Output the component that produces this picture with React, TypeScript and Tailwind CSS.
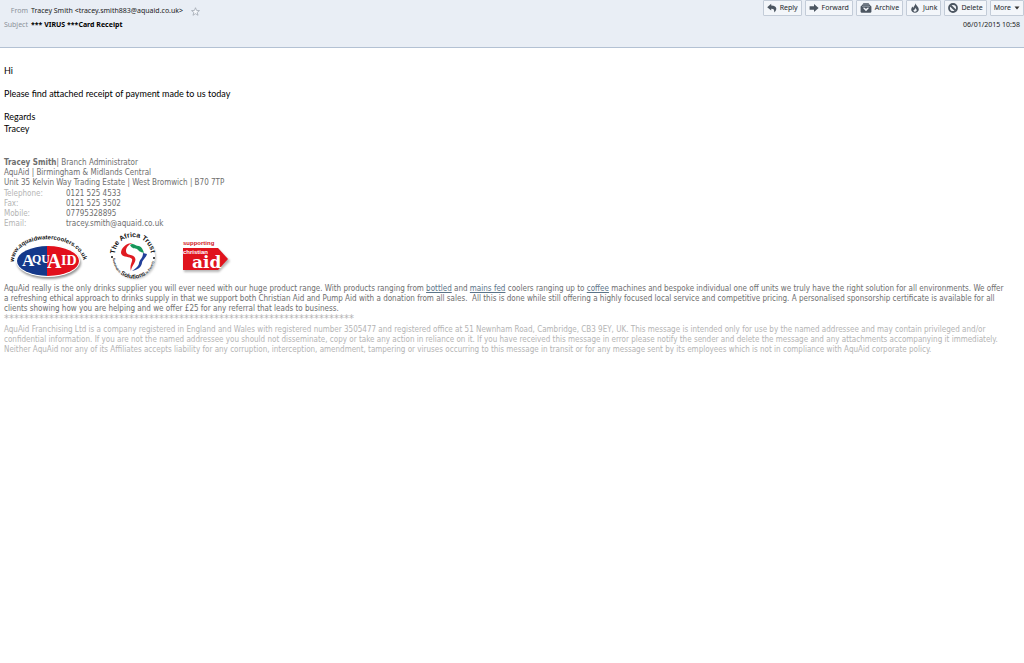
import React from 'react';

const contactRows = [
  { label: 'Telephone:', value: '0121 525 4533' },
  { label: 'Fax:', value: '0121 525 3502' },
  { label: 'Mobile:', value: '07795328895' },
  { label: 'Email:', value: 'tracey.smith@aquaid.co.uk' },
];

const ReplyIcon = () => (
  <svg viewBox="0 0 10 10" className="h-[10px] w-[10px]" aria-hidden="true">
    <path d="M4.2 0.8 L0.2 4.2 L4.2 7.6 V5.7 C6.2 5.6 7.4 6 7.3 9.4 C10.8 6.4 9.8 2.6 4.2 2.6 Z" fill="#4c5661" />
  </svg>
);

const ForwardIcon = () => (
  <svg viewBox="0 0 10 10" className="h-[10px] w-[10px]" aria-hidden="true">
    <path d="M0.6 3.2 H5 V1 L9.6 5 L5 9 V6.8 H0.6 Z" fill="#4c5661" />
  </svg>
);

const ArchiveIcon = () => (
  <svg viewBox="0 0 12 10" className="h-[10px] w-[12px]" aria-hidden="true">
    <path d="M3.4 0.2 H8.6 L9.6 1.8 L11.4 3.4 V9 L10.6 9.8 H1.4 L0.6 9 V3.4 L2.4 1.8 Z" fill="#4c5661" />
    <path d="M3 1.9 H9 M2 3.4 H10" stroke="#aeb7c1" strokeWidth="0.6" />
    <path d="M2.8 4.8 H4.8 L6 6 L7.2 4.8 H9.2 L6 8.2 Z" fill="#f3f6fa" />
  </svg>
);

const JunkIcon = () => (
  <svg viewBox="0 0 10 10" className="h-[10px] w-[10px]" aria-hidden="true">
    <path d="M5.4 0.2 C5.8 2.6 9 3.8 8.8 6.6 C8.7 8.6 7 9.8 5 9.8 C2.8 9.8 1.2 8.5 1.2 6.6 C1.2 5 2 4.2 2.6 3.4 C2.8 4.2 3 4.6 3.5 4.8 C3.6 3 5.4 2.4 5.4 0.2 Z" fill="#4c5661" />
    <path d="M5.2 4.6 C5.2 5.8 6.8 6 6.7 7.3 C6.6 8.3 5.9 8.7 5 8.7 C4 8.7 3.4 8 3.4 7.2 C4.6 7.2 5.2 6 5.2 4.6 Z" fill="#f3f6fa" />
  </svg>
);

const DeleteIcon = () => (
  <svg viewBox="0 0 10 10" className="h-[10px] w-[10px]" aria-hidden="true">
    <circle cx="5" cy="5" r="4" fill="none" stroke="#4c5661" strokeWidth="1.8" />
    <path d="M2.4 2.6 L7.6 7.4" stroke="#4c5661" strokeWidth="2" />
  </svg>
);

const StarIcon = () => (
  <svg viewBox="0 0 10 10" className="h-[9px] w-[9px]" aria-hidden="true">
    <path d="M5 0.8 L6.2 3.8 L9.4 4 L6.9 6 L7.8 9.2 L5 7.4 L2.2 9.2 L3.1 6 L0.6 4 L3.8 3.8 Z" fill="#f6f8fb" stroke="#9aa2ab" strokeWidth="0.8" />
  </svg>
);

const actions = [
  { label: 'Reply', icon: <ReplyIcon /> },
  { label: 'Forward', icon: <ForwardIcon /> },
  { label: 'Archive', icon: <ArchiveIcon /> },
  { label: 'Junk', icon: <JunkIcon /> },
  { label: 'Delete', icon: <DeleteIcon /> },
];

const buttonClass =
  'flex h-4 items-center gap-[3px] rounded-[1px] border border-[#c3ccd8] bg-[#f3f6fa] px-[3px] text-[#22262b]';

const linkClass = 'text-[#5b7488] underline';

const AquaidLogo = () => (
  <svg viewBox="0 0 90 50" className="h-[50px] w-[90px]" role="img" aria-label="AquAid">
    <defs>
      <path id="aquaid-arc" d="M14 31 C15 0 80 1 84 32" />
      <clipPath id="aquaid-oval">
        <ellipse cx="48" cy="30" rx="31" ry="15" />
      </clipPath>
      <filter id="logo-shadow" x="-20%" y="-20%" width="140%" height="150%">
        <feGaussianBlur stdDeviation="1.2" />
      </filter>
    </defs>
    <ellipse cx="49" cy="32" rx="32" ry="16" fill="#666666" opacity="0.7" filter="url(#logo-shadow)" />
    <ellipse cx="48" cy="30" rx="32" ry="16" fill="#ffffff" />
    <g clipPath="url(#aquaid-oval)">
      <rect x="16" y="14" width="31" height="34" fill="#14388a" />
      <rect x="47" y="14" width="33" height="34" fill="#e2101c" />
    </g>
    <g fill="#ffffff" fontFamily="'Liberation Serif', serif" fontWeight="bold">
      <text x="22" y="35" fontSize="17">A</text>
      <text x="32" y="32" fontSize="12">QU</text>
      <text x="47" y="37" fontSize="20">A</text>
      <text x="61" y="34" fontSize="14">ID</text>
    </g>
    <text fill="#111111" fontFamily="'Liberation Sans', sans-serif" fontSize="6" fontWeight="bold">
      <textPath href="#aquaid-arc">www.aquaidwatercoolers.co.uk</textPath>
    </text>
  </svg>
);

const AfricaTrustLogo = () => (
  <svg viewBox="0 0 50 50" className="h-[50px] w-[50px]" role="img" aria-label="The Africa Trust">
    <defs>
      <path id="africa-top" d="M6 23 A18 18 0 0 1 42 25 V32" />
      <path id="africa-bottom" d="M4 27 A20 20 0 0 0 45 27" />
      <filter id="africa-shadow" x="-20%" y="-20%" width="140%" height="140%">
        <feGaussianBlur stdDeviation="1.2" />
      </filter>
    </defs>
    <circle cx="26" cy="27" r="21" fill="#999999" opacity="0.6" filter="url(#africa-shadow)" />
    <circle cx="24" cy="25" r="22" fill="#ffffff" />
    <path d="M24 12 C17 12 12 17 12 22 C13 27 21 25 23 28 C24 31 20 34 22 40 C22 35 28 31 26 27 C25 23 17 25 17 20 C17 16 20 13 24 12 Z" fill="#e01b22" />
    <path d="M21 14 C24 11 26 15 30 15 C33 16 34 19 35 22 C31 21 30 20 28 18 C26 17 23 18 21 14 Z" fill="#17965a" />
    <path d="M34 22 L38 23 C37 27 33 29 33 32 C32 37 28 39 23 40 C27 37 30 35 30 32 C31 28 34 27 34 22 Z" fill="#213f9a" />
    <g fill="#111111" fontFamily="'Liberation Sans', sans-serif" fontWeight="bold">
      <text fontSize="7">
        <textPath href="#africa-top">The Africa Trust</textPath>
      </text>
      <text>
        <textPath href="#africa-bottom">
          <tspan fontSize="3">Sustainable </tspan>
          <tspan fontSize="6">Solutions</tspan>
          <tspan fontSize="3"> to Poverty</tspan>
        </textPath>
      </text>
      <circle cx="3" cy="26" r="1" />
      <circle cx="45" cy="27" r="1" />
    </g>
  </svg>
);

const ChristianAidLogo = () => (
  <svg viewBox="0 0 52 40" className="h-[40px] w-[52px]" role="img" aria-label="Supporting Christian Aid">
    <defs>
      <filter id="aid-shadow" x="-20%" y="-20%" width="140%" height="140%">
        <feGaussianBlur stdDeviation="0.8" />
      </filter>
    </defs>
    <path d="M2 11 H37 L48 22 L37 33 H2 Z" fill="#888888" opacity="0.6" filter="url(#aid-shadow)" />
    <path d="M1 9 H36 L46 20 L36 31 H1 Z" fill="#e0131d" />
    <g fontFamily="'Liberation Sans', sans-serif" fontWeight="bold">
      <text x="1" y="6" fontSize="6" fill="#d0131d">supporting</text>
      <text x="1" y="15" fontSize="6" fill="#ffffff">christian</text>
    </g>
    <text x="10" y="29" fontSize="17" fontWeight="bold" fontFamily="'DejaVu Serif', serif" fill="#ffffff">aid</text>
  </svg>
);

const App: React.FC = () => {
  return (
    <div className="min-h-screen bg-white">
      <header className="flex h-12 items-start justify-between border-b border-[#b3c1d3] bg-[#e9eef5] font-['Noto_Sans','Open_Sans',sans-serif] text-[7px] leading-[14px] text-[#1c1c1c]">
        <dl className="grid grid-cols-[28px_auto] gap-x-[3px] pt-1">
          <dt className="text-right text-[#8b9299]">From</dt>
          <dd className="flex items-center gap-2">
            Tracey Smith &lt;tracey.smith883@aquaid.co.uk&gt;
            <button type="button" aria-label="Star this contact"><StarIcon /></button>
          </dd>
          <dt className="text-right text-[#8b9299]">Subject</dt>
          <dd className="font-bold text-black">*** VIRUS ***Card Receipt</dd>
        </dl>
        <div className="flex flex-col items-end">
          <div className="flex gap-[3px]">
            {actions.map((action) => (
              <button key={action.label} type="button" className={buttonClass}>
                {action.icon}
                {action.label}
              </button>
            ))}
            <button type="button" className={buttonClass}>
              More
              <svg viewBox="0 0 6 4" className="h-1 w-[6px]" aria-hidden="true">
                <path d="M0.5 0.5 H5.5 L3 3.5 Z" fill="#333333" />
              </svg>
            </button>
          </div>
          <time className="mt-[2px] pr-1">06/01/2015 10:58</time>
        </div>
      </header>

      <main className="px-1 pt-[17px]">
        <section className="font-[Lato,sans-serif] text-[9px] leading-[12px] text-black">
          <p>Hi</p>
          <p className="mt-[11px]">Please find attached receipt of payment made to us today</p>
          <p className="mt-[11px]">
            Regards
            <br />
            Tracey
          </p>
        </section>

        <section className="mt-[23px] font-['DejaVu_Sans_Condensed','DejaVu_Sans',sans-serif] text-[8px] leading-[10px] text-[#6e6e6e]">
          <p><strong>Tracey Smith</strong>| Branch Administrator</p>
          <p>AquAid | Birmingham &amp; Midlands Central</p>
          <p className="mb-px">Unit 35 Kelvin Way Trading Estate | West Bromwich | B70 7TP</p>
          <dl>
            {contactRows.map((row) => (
              <div key={row.label} className="flex">
                <dt className="w-[62px] text-[#b4b4b4]">{row.label}</dt>
                <dd>{row.value}</dd>
              </div>
            ))}
          </dl>
          <div className="-ml-1 mt-[2px] flex items-start">
            <AquaidLogo />
            <div className="ml-[19px]"><AfricaTrustLogo /></div>
            <div className="ml-[23px] mt-2"><ChristianAidLogo /></div>
          </div>
          <p className="mt-[3px] pr-1">
            AquAid really is the only drinks supplier you will ever need with our huge product range. With products ranging from{' '}
            <a href="#bottled" className={linkClass}>bottled</a> and{' '}
            <a href="#mains-fed" className={linkClass}>mains fed</a> coolers ranging up to{' '}
            <a href="#coffee" className={linkClass}>coffee</a> machines and bespoke individual one off units we truly have the right solution for all environments. We offer a&nbsp;refreshing ethical approach to drinks supply in that we support both Christian Aid and Pump Aid with a donation from all sales.&nbsp; All this is done while still offering a highly focused local service and competitive pricing. A personalised sponsorship certificate is available for all clients showing how you are helping and we offer £25 for any referral that leads to business.
          </p>
          <p className="font-['DejaVu_Sans',sans-serif] text-[10px] text-[#b4b4b4]">**********************************************************************</p>
          <p className="mt-px text-[#b4b4b4]">
            AquAid Franchising Ltd is a company registered in England and Wales with registered number 3505477 and registered office at 51 Newnham Road, Cambridge, CB3 9EY, UK. This message is intended only for use by the named addressee and may contain privileged and/or confidential information. If you are not the named addressee you should not disseminate, copy or take any action in reliance on it. If you have received this message in error please notify the sender and delete the message and any attachments accompanying it immediately. Neither AquAid nor any of its Affiliates accepts liability for any corruption, interception, amendment, tampering or viruses occurring to this message in transit or for any message sent by its employees which is not in compliance with AquAid corporate policy.
          </p>
        </section>
      </main>
    </div>
  );
};

export default App;
